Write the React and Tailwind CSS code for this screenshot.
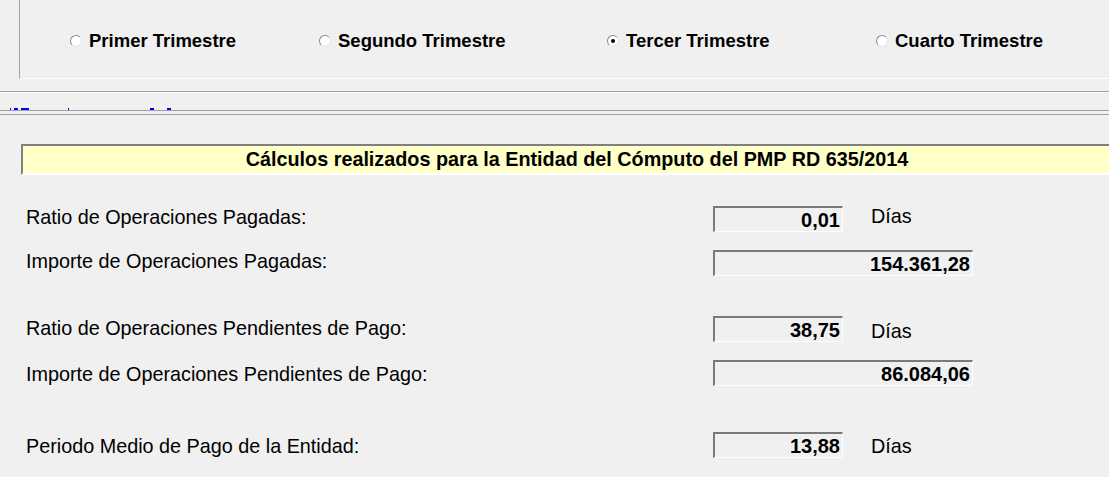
const trimestres = [
  { label: "Primer Trimestre", w: "w-[249px]" },
  { label: "Segundo Trimestre", w: "w-[288px]" },
  { label: "Tercer Trimestre", w: "w-[269px]", checked: true },
  { label: "Cuarto Trimestre", w: "w-[200px]" },
];

// restos azules del enlace recortado bajo la barra
const blueBits = [
  { l: "ml-[10px]", w: "w-[1px]" },
  { l: "ml-[3px]", w: "w-[4px]" },
  { l: "ml-[3px]", w: "w-[8px]" },
  { l: "ml-[39px]", w: "w-[1px]" },
  { l: "ml-[81px]", w: "w-[4px]" },
  { l: "ml-[13px]", w: "w-[4px]" },
];

function Radio({ checked }) {
  return (
    <span className="w-[12px] h-[12px] rounded-full border border-t-[#8a8a8a] border-l-[#8a8a8a] border-b-[#e4e4e4] border-r-[#e4e4e4] bg-white flex items-center justify-center shrink-0">
      {checked && <span className="w-[4px] h-[4px] rounded-full bg-black" />}
    </span>
  );
}

function ValueBox({ value, wide }) {
  return (
    <div
      className={`${wide ? "w-[260px]" : "w-[130px]"} h-[26px] shrink-0 border-t-2 border-l-2 border-t-[#7a7a7a] border-l-[#7a7a7a] border-b border-r border-b-white border-r-white flex items-center justify-end pr-[2px] font-bold text-[20px] text-black leading-none`}
    >
      {value}
    </div>
  );
}

function Row({ label, value, wide, dias, diasClass, labelClass, className }) {
  return (
    <div className={`flex items-center h-[26px] ${className || ""}`}>
      <div className={`w-[713px] pl-[26px] shrink-0 text-[19.8px] text-black ${labelClass || ""}`}>{label}</div>
      <ValueBox value={value} wide={wide} />
      {dias && <div className={`ml-[28px] text-[19.8px] text-black ${diasClass || ""}`}>Días</div>}
    </div>
  );
}

export default function App() {
  return (
    <div className="w-[1109px] h-[477px] overflow-hidden bg-[#f0f0f0] font-['Liberation_Sans',Arial,sans-serif]">
      {/* selector de trimestre */}
      <div className="ml-[19px] h-[79px] border-l border-l-[#a0a0a0] border-b border-b-white flex items-center pl-[50px] pt-[4px]">
        {trimestres.map((t) => (
          <div key={t.label} className={`${t.w} shrink-0 flex items-center gap-[7px]`}>
            <Radio checked={t.checked} />
            <span className="font-bold text-[18.5px] text-black">{t.label}</span>
          </div>
        ))}
      </div>

      <div className="mt-[12px] border-t border-t-[#a0a0a0] border-b border-b-white h-[2px]" />
      <div className="h-[17px] flex items-end">
        {blueBits.map((b, i) => (
          <span key={i} className={`${b.l} ${b.w} h-[2px] bg-[#0000ff] shrink-0`} />
        ))}
      </div>
      <div className="h-[4px] border-t border-t-[#a0a0a0]" />
      <div className="border-t border-t-[#a0a0a0]" />

      <div className="mt-[29px] ml-[21px] w-[1110px] h-[31px] bg-[#ffffc8] border-t-2 border-l-2 border-t-[#808080] border-l-[#808080] border-b-2 border-b-white flex items-center justify-center font-bold text-[19.8px] text-black">
        Cálculos realizados para la Entidad del Cómputo del PMP RD 635/2014
      </div>

      <div className="mt-[31px] flex flex-col">
        <Row label="Ratio de Operaciones Pagadas:" value="0,01" dias diasClass="-mt-[4px]" labelClass="-mt-[2px]" />
        <Row label="Importe de Operaciones Pagadas:" value="154.361,28" wide className="mt-[18px]" labelClass="-mt-[2px]" />
        <Row label="Ratio de Operaciones Pendientes de Pago:" value="38,75" dias diasClass="mt-[6px]" className="mt-[40px]" />
        <Row label="Importe de Operaciones Pendientes de Pago:" value="86.084,06" wide className="mt-[18px]" labelClass="mt-[4px]" />
        <Row label="Periodo Medio de Pago de la Entidad:" value="13,88" dias diasClass="mt-[4px]" className="mt-[46px]" labelClass="mt-[4px]" />
      </div>
    </div>
  );
}
